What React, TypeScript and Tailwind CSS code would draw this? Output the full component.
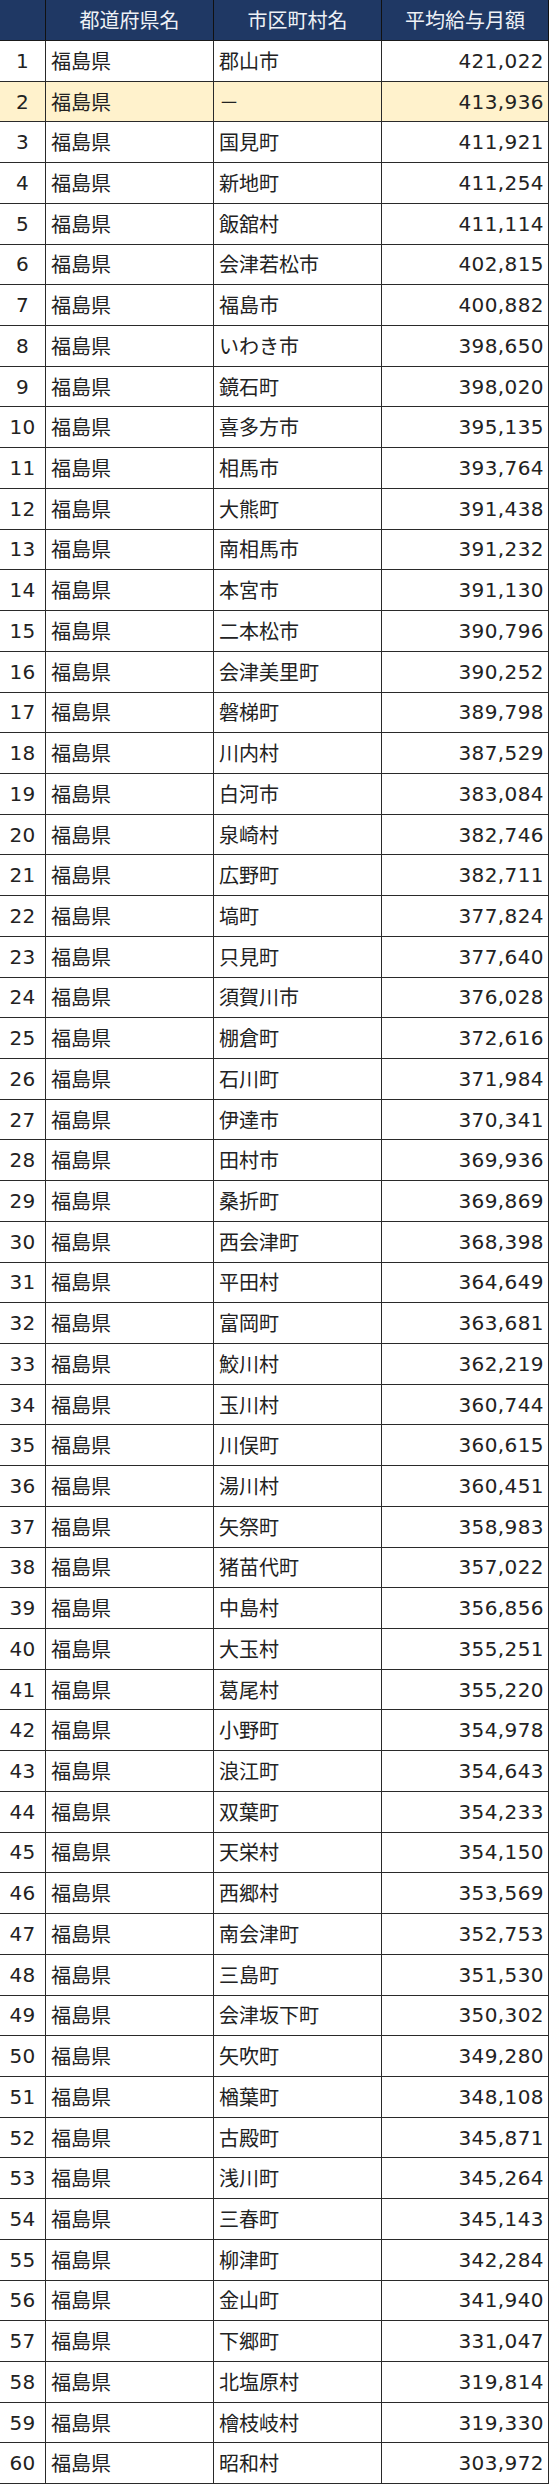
import React from 'react';

const rows: [string, string][] = [
  ['郡山市', '421,022'],
  ['－', '413,936'],
  ['国見町', '411,921'],
  ['新地町', '411,254'],
  ['飯舘村', '411,114'],
  ['会津若松市', '402,815'],
  ['福島市', '400,882'],
  ['いわき市', '398,650'],
  ['鏡石町', '398,020'],
  ['喜多方市', '395,135'],
  ['相馬市', '393,764'],
  ['大熊町', '391,438'],
  ['南相馬市', '391,232'],
  ['本宮市', '391,130'],
  ['二本松市', '390,796'],
  ['会津美里町', '390,252'],
  ['磐梯町', '389,798'],
  ['川内村', '387,529'],
  ['白河市', '383,084'],
  ['泉崎村', '382,746'],
  ['広野町', '382,711'],
  ['塙町', '377,824'],
  ['只見町', '377,640'],
  ['須賀川市', '376,028'],
  ['棚倉町', '372,616'],
  ['石川町', '371,984'],
  ['伊達市', '370,341'],
  ['田村市', '369,936'],
  ['桑折町', '369,869'],
  ['西会津町', '368,398'],
  ['平田村', '364,649'],
  ['富岡町', '363,681'],
  ['鮫川村', '362,219'],
  ['玉川村', '360,744'],
  ['川俣町', '360,615'],
  ['湯川村', '360,451'],
  ['矢祭町', '358,983'],
  ['猪苗代町', '357,022'],
  ['中島村', '356,856'],
  ['大玉村', '355,251'],
  ['葛尾村', '355,220'],
  ['小野町', '354,978'],
  ['浪江町', '354,643'],
  ['双葉町', '354,233'],
  ['天栄村', '354,150'],
  ['西郷村', '353,569'],
  ['南会津町', '352,753'],
  ['三島町', '351,530'],
  ['会津坂下町', '350,302'],
  ['矢吹町', '349,280'],
  ['楢葉町', '348,108'],
  ['古殿町', '345,871'],
  ['浅川町', '345,264'],
  ['三春町', '345,143'],
  ['柳津町', '342,284'],
  ['金山町', '341,940'],
  ['下郷町', '331,047'],
  ['北塩原村', '319,814'],
  ['檜枝岐村', '319,330'],
  ['昭和村', '303,972'],
];

const jp = "font-['Noto_Sans_CJK_JP',sans-serif]";
const num = "font-['DejaVu_Sans','Noto_Sans_CJK_JP',sans-serif] tracking-[0.4px]";

const App: React.FC = () => {
  return (
    <div className="w-[549px] bg-white text-[20px] text-[#222]">
      {/* Header */}
      <div className="grid grid-cols-[46px_168px_168px_167px] h-[41px] bg-[#1f3864] text-[#eef1f6] border-b border-[#1a1a1a]">
        <div className="border-r border-[#111]"></div>
        <div className={`flex items-center justify-center border-r border-[#111] ${jp}`}>都道府県名</div>
        <div className={`flex items-center justify-center border-r border-[#111] ${jp}`}>市区町村名</div>
        <div className={`flex items-center justify-center border-r border-[#111] ${jp}`}>平均給与月額</div>
      </div>

      {rows.map(([city, amount], i) => (
        <div
          key={i}
          className={`grid grid-cols-[46px_168px_168px_167px] h-[40.72px] border-b border-[#2a2a2a] ${
            i === 1 ? 'bg-[#fff2cc]' : 'bg-white'
          }`}
        >
          <div className={`flex items-center justify-center border-r border-[#2a2a2a] ${num}`}>{i + 1}</div>
          <div className={`flex items-center pl-[5px] border-r border-[#2a2a2a] ${jp}`}>福島県</div>
          <div className={`flex items-center pl-[5px] border-r border-[#2a2a2a] ${jp}`}>{city}</div>
          <div className={`flex items-center justify-end pr-[4px] border-r border-[#2a2a2a] ${num}`}>{amount}</div>
        </div>
      ))}
    </div>
  );
};

export default App;
